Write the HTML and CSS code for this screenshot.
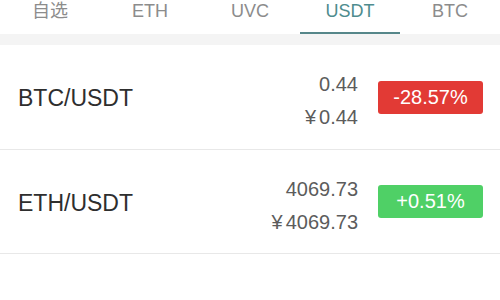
FILE: index.html
```html
<!DOCTYPE html>
<html lang="zh">
<head>
<meta charset="utf-8">
<title>Market</title>
<link rel="stylesheet" href="styles.css">
</head>
<body>
<div class="tabs">
  <div class="tab">自选</div>
  <div class="tab">ETH</div>
  <div class="tab">UVC</div>
  <div class="tab active">USDT</div>
  <div class="tab">BTC</div>
</div>
<div class="band"></div>
<div class="list">
  <div class="row row-first">
    <div class="pair">BTC/USDT</div>
    <div class="prices">
      <div class="price">0.44</div>
      <div class="price"><span class="yen">¥</span>0.44</div>
    </div>
    <div class="badge down">-28.57%</div>
  </div>
  <div class="row">
    <div class="pair">ETH/USDT</div>
    <div class="prices">
      <div class="price">4069.73</div>
      <div class="price"><span class="yen">¥</span>4069.73</div>
    </div>
    <div class="badge up">+0.51%</div>
  </div>
</div>
</body>
</html>
```
FILE: styles.css
```css
html, body {
  margin: 0;
  padding: 0;
  background: #ffffff;
  font-family: "Liberation Sans", "Noto Sans CJK SC", Arial, sans-serif;
}

.tabs {
  display: flex;
  height: 34px;
}

.tab {
  flex: 1;
  box-sizing: border-box;
  height: 34px;
  text-align: center;
  font-size: 18px;
  line-height: 23px;
  color: #8c8c8c;
  border-bottom: 2px solid transparent;
}

.tab.active {
  color: #4e8c8e;
  border-bottom-color: #56878a;
}

.band {
  height: 11px;
  background: #f4f4f4;
}

.row {
  display: flex;
  align-items: center;
  height: 103px;
  padding: 0 17px 0 18px;
  border-bottom: 1px solid #e8e8e8;
}

.row-first {
  height: 104px;
}

.pair {
  flex: 1;
  font-size: 23px;
  color: #2e2e2e;
  padding-top: 3px;
}

.prices {
  text-align: right;
  font-size: 20px;
  line-height: 33px;
  color: #5c5c5c;
  padding-top: 8px;
}

.yen {
  margin-right: 3px;
}

.badge {
  margin-left: 20px;
  width: 105px;
  height: 33px;
  border-radius: 3px;
  display: flex;
  align-items: center;
  justify-content: center;
  color: #ffffff;
  font-size: 20px;
}

.badge.down {
  background: #e23a35;
}

.badge.up {
  background: #4fd066;
}
```
